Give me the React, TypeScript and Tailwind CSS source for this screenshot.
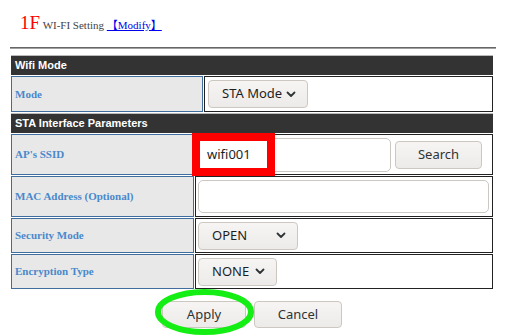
import React from 'react';

const ctrlFont = "font-['Noto_Sans',sans-serif]";

function Chevron() {
  return (
    <svg width="10" height="7" viewBox="0 0 10 7" className="shrink-0">
      <path d="M1.5 1.5 L5 5 L8.5 1.5" fill="none" stroke="#2e3436" strokeWidth="1.8" strokeLinecap="round" strokeLinejoin="round" />
    </svg>
  );
}

function Select({ label, width }: { label: string; width: string }) {
  return (
    <div
      className={`${width} h-[28px] flex items-center justify-between pl-[13px] pr-[11px] rounded-[4px] border border-[#cdc7c2] bg-gradient-to-b from-[#f6f5f4] to-[#edebe9] text-[13px] text-[#1e1e1e] ${ctrlFont}`}
    >
      <span>{label}</span>
      <Chevron />
    </div>
  );
}

function Header({ title }: { title: string }) {
  return (
    <div className="h-[20px] bg-[#333333] border-t border-[#bbbbbb] pl-[4px] flex items-center text-white font-bold text-[11px] font-['Liberation_Sans',sans-serif]">
      {title}
    </div>
  );
}

function Label({ text }: { text: string }) {
  return (
    <div className="bg-[#e8e8e8] border border-[#3f6d9e] pl-[3px] flex items-center text-[#4a88cc] font-bold text-[11px] font-['Liberation_Serif',serif]">
      {text}
    </div>
  );
}

export default function App() {
  return (
    <div className="w-[505px] h-[336px] bg-white relative overflow-hidden">
      {/* Title */}
      <div className="pl-[20px] pt-[13px] leading-[20px] font-['Liberation_Serif','Noto_Sans_CJK_SC',serif]">
        <span className="text-[19px] text-[#ff0000]">1F</span>
        <span className="text-[11px] text-[#444444]"> WI-FI Setting </span>
        <a className="text-[11px] text-[#0000ee] underline cursor-pointer">【Modify】</a>
      </div>

      <div className="ml-[10px] mt-[12px] w-[486px] h-[2px] border-t border-t-[#666666] border-b border-b-[#a0a0a0]" />

      {/* Wifi mode */}
      <div className="ml-[11px] mt-[6px] w-[482px] flex flex-col gap-[1px]">
        <Header title="Wifi Mode" />
        <div className="grid grid-cols-[192px_1fr] gap-[1px] h-[36px]">
          <Label text="Mode" />
          <div className="border border-[#222222] px-[3px] flex items-center">
            <Select label="STA Mode" width="w-[100px]" />
          </div>
        </div>

        {/* STA interface */}
        <Header title="STA Interface Parameters" />
        <div className="grid grid-cols-[183px_1fr] gap-[1px] h-[41px]">
          <Label text="AP's SSID" />
          <div className="border border-[#222222] pl-[2px] pr-[3px] flex items-center gap-[4px]">
            <div className={`w-[193px] h-[34px] rounded-[5px] border border-[#cdc7c2] bg-white flex items-center pl-[8px] text-[13px] text-[#1e1e1e] ${ctrlFont}`}>
              wifi001
            </div>
            <div className={`w-[87px] h-[28px] rounded-[4px] border border-[#cdc7c2] bg-gradient-to-b from-[#f6f5f4] to-[#edebe9] flex items-center justify-center text-[13px] text-[#2e3436] ${ctrlFont}`}>
              Search
            </div>
          </div>
        </div>
        <div className="grid grid-cols-[183px_1fr] gap-[1px] h-[41px]">
          <Label text="MAC Address (Optional)" />
          <div className="border border-[#222222] pl-[2px] pr-[3px] flex items-center">
            <div className="w-full h-[33px] rounded-[5px] border border-[#cdc7c2] bg-white" />
          </div>
        </div>
        <div className="grid grid-cols-[183px_1fr] gap-[1px] h-[35px]">
          <Label text="Security Mode" />
          <div className="border border-[#222222] pl-[2px] flex items-center">
            <Select label="OPEN" width="w-[100px]" />
          </div>
        </div>
        <div className="grid grid-cols-[183px_1fr] gap-[1px] h-[35px]">
          <Label text="Encryption Type" />
          <div className="border border-[#222222] pl-[2px] flex items-center">
            <Select label="NONE" width="w-[79px]" />
          </div>
        </div>

        <div className={`mt-[11px] flex justify-center gap-[8px] text-[13px] text-[#2e3436] ${ctrlFont}`}>
          <div className="w-[84px] h-[27px] rounded-[4px] border border-[#cdc7c2] bg-gradient-to-b from-[#f6f5f4] to-[#edebe9] flex items-center justify-center">
            Apply
          </div>
          <div className="w-[88px] h-[27px] rounded-[4px] border border-[#cdc7c2] bg-gradient-to-b from-[#f6f5f4] to-[#edebe9] flex items-center justify-center">
            Cancel
          </div>
        </div>
      </div>

      {/* annotations */}
      <div className="absolute left-[192px] top-[133px] w-[83px] h-[43px] border-[8px] border-[#ff0000]" />
      <svg className="absolute left-[152px] top-[286px]" width="106" height="52" viewBox="0 0 106 52">
        <ellipse cx="52.5" cy="26" rx="46.5" ry="20" fill="none" stroke="#14ee14" strokeWidth="6" />
      </svg>
    </div>
  );
}
